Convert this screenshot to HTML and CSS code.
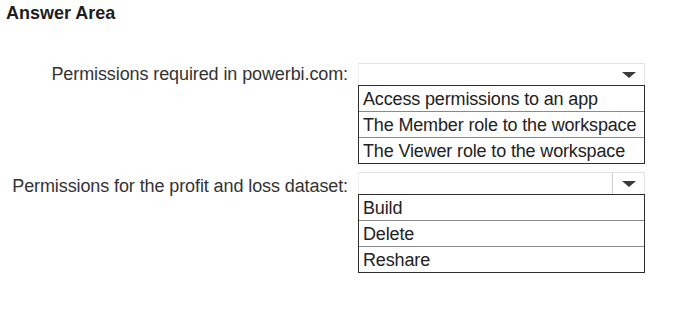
FILE: index.html
```html
<!DOCTYPE html>
<html lang="en">
<head>
    <meta charset="UTF-8">
    <meta name="viewport" content="width=device-width, initial-scale=1.0">
    <title>Answer Area</title>
    <link rel="stylesheet" href="styles.css">
</head>
<body>
    <h1 class="title">Answer Area</h1>

    <div class="question">
        <div class="label">Permissions required in powerbi.com:</div>
        <div class="select">
            <span class="arrow"></span>
        </div>
        <ul class="options">
            <li>Access permissions to an app</li>
            <li>The Member role to the workspace</li>
            <li>The Viewer role to the workspace</li>
        </ul>
    </div>

    <div class="question second">
        <div class="label">Permissions for the profit and loss dataset:</div>
        <div class="select divided">
            <span class="arrow"></span>
        </div>
        <ul class="options">
            <li>Build</li>
            <li>Delete</li>
            <li>Reshare</li>
        </ul>
    </div>
</body>
</html>
```

FILE: styles.css
```css
* {
    margin: 0;
    padding: 0;
    box-sizing: border-box;
}

body {
    background: #ffffff;
    font-family: 'Liberation Sans', Arial, sans-serif;
    color: #2a2a2a;
}

.title {
    font-size: 18px;
    font-weight: bold;
    line-height: 20px;
    padding: 3px 0 0 6px;
    color: #1e1e1e;
}

.question {
    display: grid;
    grid-template-columns: 358px 287px;
    margin-top: 40px;
}

.question.second {
    margin-top: 8px;
}

.label {
    height: 22px;
    font-size: 18px;
    line-height: 22px;
    text-align: right;
    padding-right: 10px;
    color: #333;
    letter-spacing: -0.1px;
}

.second .label {
    line-height: 28px;
}

.select {
    position: relative;
    height: 22px;
    border-top: 1px solid #e2e2e2;
    border-right: 1px solid #e6e6e6;
    border-left: 1px solid #eeeeee;
}

.select.divided::before {
    content: '';
    position: absolute;
    top: 0;
    right: 31px;
    bottom: 0;
    border-left: 1px solid #cfcfcf;
}

.arrow {
    position: absolute;
    right: 8px;
    top: 8px;
    width: 0;
    height: 0;
    border-left: 7px solid transparent;
    border-right: 7px solid transparent;
    border-top: 6px solid #3a3a3a;
}

.options {
    grid-column: 2;
    list-style: none;
    border: 1px solid #2e2e2e;
}

.options li {
    height: 26px;
    line-height: 27px;
    font-size: 18px;
    padding-left: 4px;
    color: #222;
    letter-spacing: -0.15px;
    border-bottom: 1px solid #8a8a8a;
}

.options li:last-child {
    height: 25px;
    border-bottom: none;
}
```
